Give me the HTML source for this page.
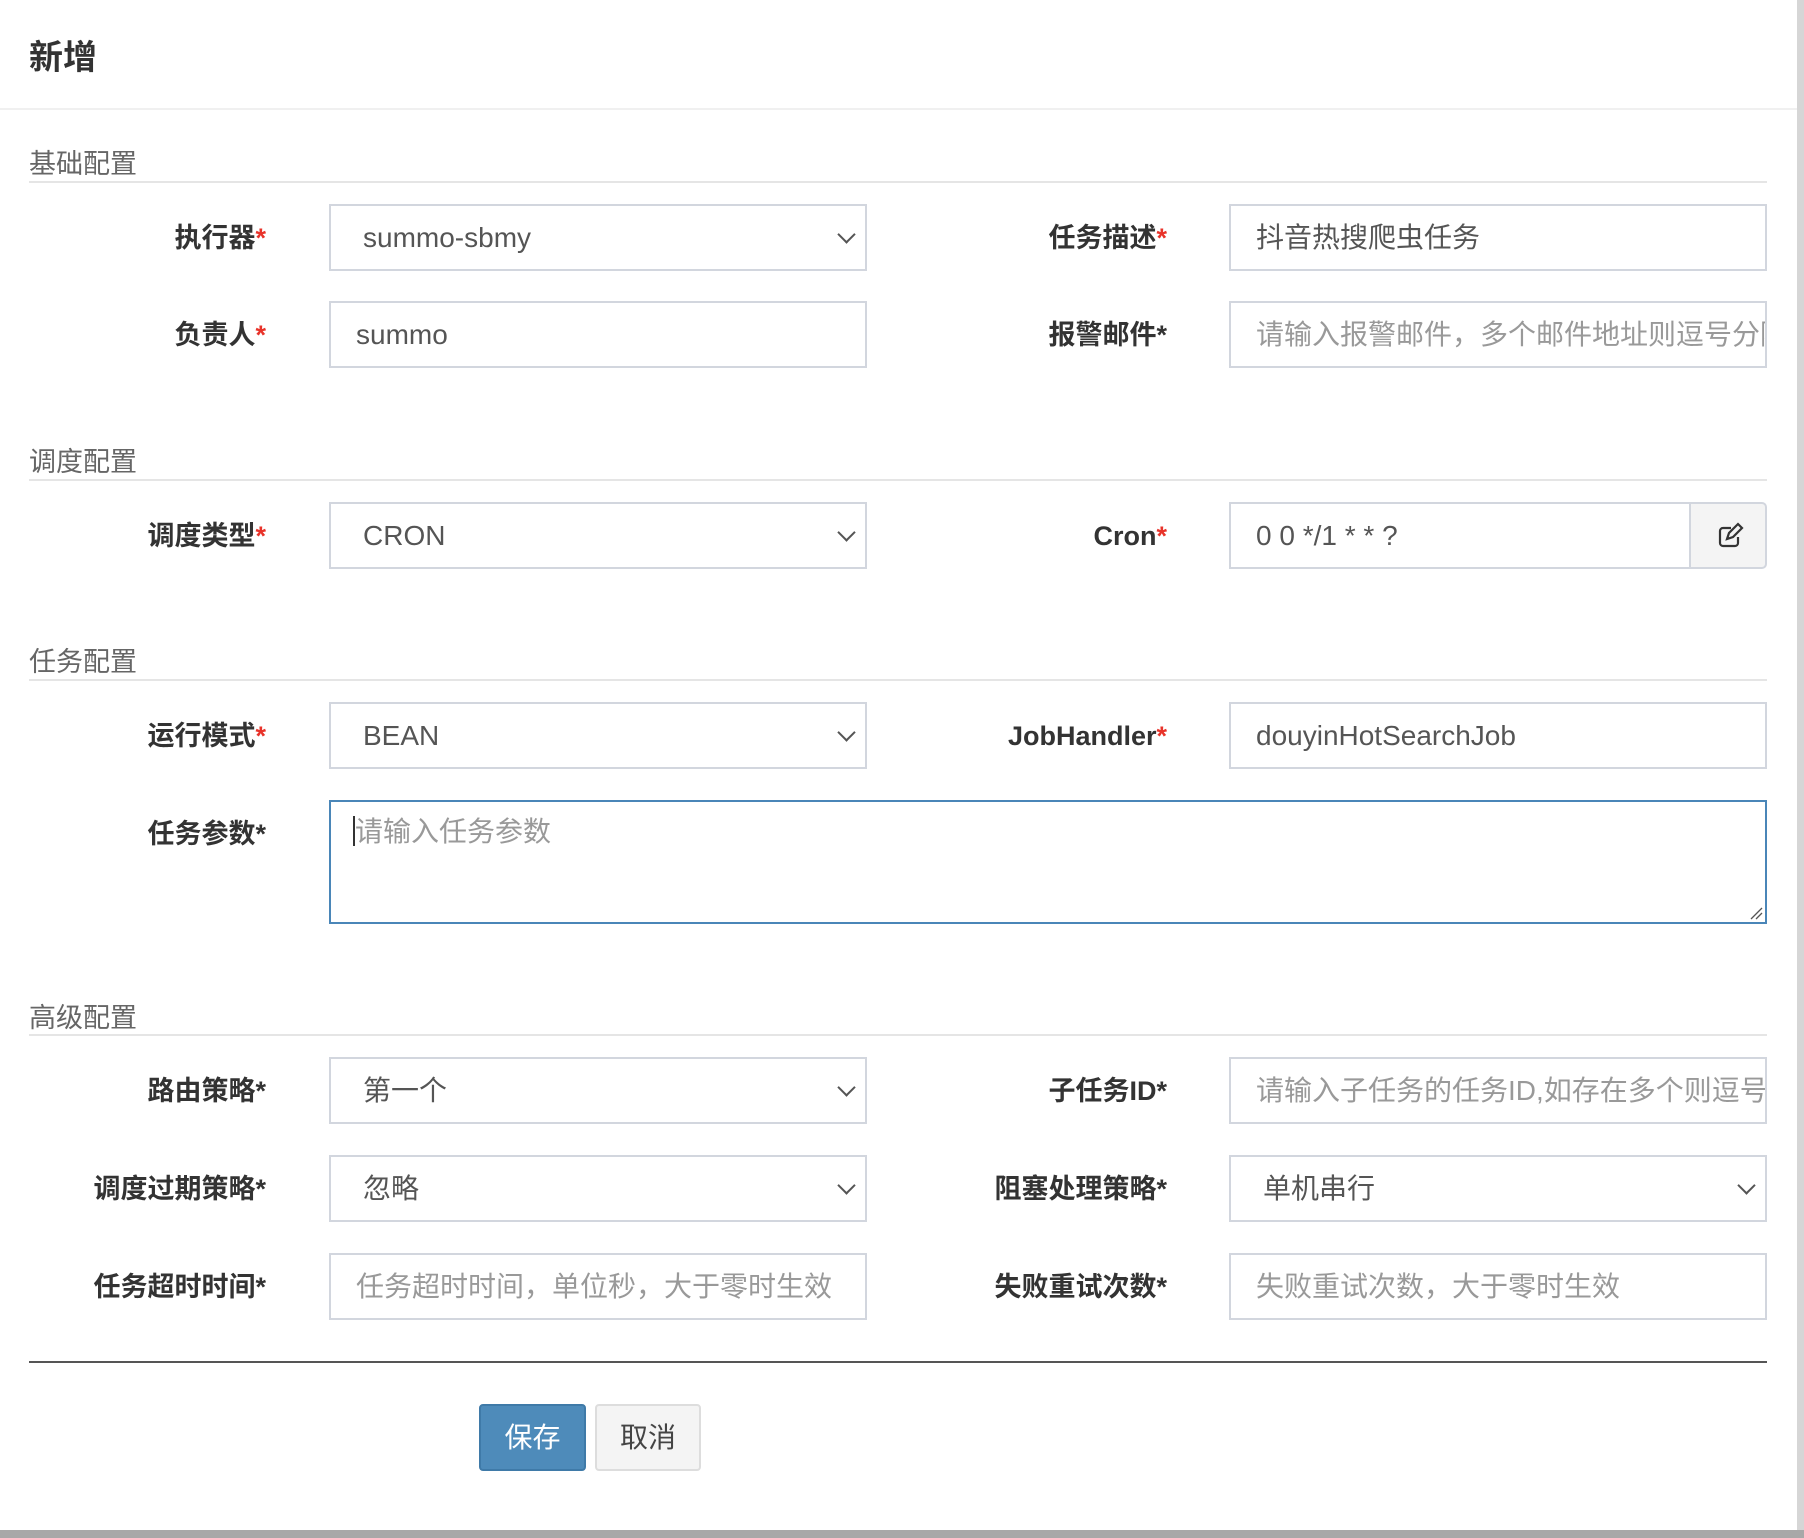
<!DOCTYPE html>
<html><head><meta charset="utf-8"><style>
*{box-sizing:border-box;margin:0;padding:0}
body{width:1804px;height:1538px;background:#fff;position:relative;overflow:hidden;font-family:"Liberation Sans","Noto Sans CJK SC",sans-serif;}
.a{position:absolute}
.title{left:29px;top:30px;font-size:34px;font-weight:bold;color:#333}
.hline{left:0;top:108px;width:1797px;height:2px;background:#f0f0f0}
.sec{left:29px;font-size:27px;color:#666}
.sline{left:29px;width:1738px;height:2px;background:#e5e5e5}
.lbl{width:240px;text-align:right;font-size:27px;font-weight:bold;color:#333;line-height:67px}
.lbl i{color:#e8332a;font-style:normal}
.inp{border:2px solid #d2d6de;height:67px;font-size:28px;color:#555;line-height:63px;padding-left:25px;padding-right:24px;white-space:nowrap;overflow:hidden}
.ph{color:#999}
.sel{padding-left:32px}
.sel:after{content:"";position:absolute;right:12px;top:22px;width:11px;height:11px;border-right:2px solid #555;border-bottom:2px solid #555;transform:rotate(45deg)}
.L{left:26px}.R{left:927px}
.il{left:329px;width:538px}.ir{left:1229px;width:538px}
.btn{height:67px;line-height:63px;font-size:28px;text-align:center;border-radius:4px}
</style></head><body>
<div class="a title">新增</div>
<div class="a hline"></div>
<div class="a" style="right:0;top:0;width:7px;height:1538px;background:#d6d6d6"></div>
<div class="a" style="left:0;top:1530px;width:1804px;height:8px;background:#a8a8a8"></div>

<div class="a sec" style="top:142px">基础配置</div>
<div class="a sline" style="top:181px"></div>
<div class="a lbl L" style="top:205px">执行器<i>*</i></div>
<div class="a inp sel il" style="top:204px">summo-sbmy</div>
<div class="a lbl R" style="top:205px">任务描述<i>*</i></div>
<div class="a inp ir" style="top:204px">抖音热搜爬虫任务</div>
<div class="a lbl L" style="top:302px">负责人<i>*</i></div>
<div class="a inp il" style="top:301px">summo</div>
<div class="a lbl R" style="top:302px">报警邮件*</div>
<div class="a inp ir ph" style="top:301px">请输入报警邮件，多个邮件地址则逗号分隔</div>

<div class="a sec" style="top:440px">调度配置</div>
<div class="a sline" style="top:479px"></div>
<div class="a lbl L" style="top:503px">调度类型<i>*</i></div>
<div class="a inp sel il" style="top:502px">CRON</div>
<div class="a lbl R" style="top:503px">Cron<i>*</i></div>
<div class="a inp" style="top:502px;left:1229px;width:462px">0 0 */1 * * ?</div>
<div class="a" style="top:502px;left:1689px;width:78px;height:67px;background:#f4f4f4;border:2px solid #d2d6de;border-radius:0 5px 5px 0">
<svg width="78" height="63" viewBox="0 0 78 63" style="position:absolute;left:-2px;top:0"><path d="M42 24h-8a3 3 0 0 0-3 3v12a3 3 0 0 0 3 3h12a3 3 0 0 0 3-3v-6" fill="none" stroke="#333" stroke-width="2.2"/><path d="M38 35l2-6 9-9 4 4-9 9z" fill="none" stroke="#333" stroke-width="2.2"/></svg></div>

<div class="a sec" style="top:640px">任务配置</div>
<div class="a sline" style="top:679px"></div>
<div class="a lbl L" style="top:703px">运行模式<i>*</i></div>
<div class="a inp sel il" style="top:702px">BEAN</div>
<div class="a lbl R" style="top:703px">JobHandler<i>*</i></div>
<div class="a inp ir" style="top:702px">douyinHotSearchJob</div>
<div class="a lbl L" style="top:801px">任务参数*</div>
<div class="a inp ph" style="top:800px;left:329px;width:1438px;height:124px;border-color:#4a86b8;line-height:60px;padding-left:24px">请输入任务参数
<svg width="14" height="14" style="position:absolute;right:2px;bottom:2px"><path d="M2 13L13 2M7 13L13 7" stroke="#555" stroke-width="1.3"/></svg></div>
<div class="a" style="left:353px;top:816px;width:2px;height:30px;background:#333"></div>

<div class="a sec" style="top:996px">高级配置</div>
<div class="a sline" style="top:1034px"></div>
<div class="a lbl L" style="top:1058px">路由策略*</div>
<div class="a inp sel il" style="top:1057px">第一个</div>
<div class="a lbl R" style="top:1058px">子任务ID*</div>
<div class="a inp ir ph" style="top:1057px">请输入子任务的任务ID,如存在多个则逗号分隔</div>
<div class="a lbl L" style="top:1156px">调度过期策略*</div>
<div class="a inp sel il" style="top:1155px">忽略</div>
<div class="a lbl R" style="top:1156px">阻塞处理策略*</div>
<div class="a inp sel ir" style="top:1155px">单机串行</div>
<div class="a lbl L" style="top:1254px">任务超时时间*</div>
<div class="a inp il ph" style="top:1253px">任务超时时间，单位秒，大于零时生效</div>
<div class="a lbl R" style="top:1254px">失败重试次数*</div>
<div class="a inp ir ph" style="top:1253px">失败重试次数，大于零时生效</div>

<div class="a" style="left:29px;top:1361px;width:1738px;height:2px;background:#555"></div>
<div class="a btn" style="left:479px;top:1404px;width:107px;background:#4e8bba;color:#fff;border:2px solid #3f7aa8">保存</div>
<div class="a btn" style="left:595px;top:1404px;width:106px;background:#f4f4f4;color:#444;border:2px solid #ddd">取消</div>
</body></html>
